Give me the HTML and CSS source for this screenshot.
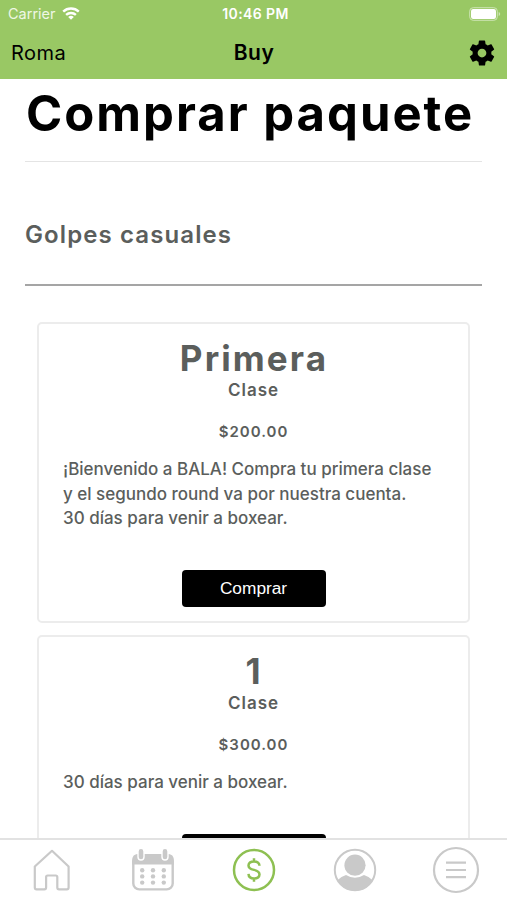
FILE: index.html
```html
<!DOCTYPE html>
<html lang="es">
<head>
    <meta charset="utf-8">
    <title>Buy</title>
    <link rel="stylesheet" href="styles.css">
</head>
<body>
<header class="top">
    <div class="status">
        <div class="carrier">
            <span>Carrier</span>
            <svg width="18" height="13" viewBox="0 0 18 13" fill="none" stroke="#fff" stroke-width="2.4">
                <path d="M1.2 4.6a11.3 11.3 0 0 1 15.6 0"/>
                <path d="M4.1 7.9a7.2 7.2 0 0 1 9.8 0"/>
                <path d="M9 12.8L6.2 10a4 4 0 0 1 5.6 0z" fill="#fff" stroke="none"/>
            </svg>
        </div>
        <span class="clock">10:46 PM</span>
        <svg class="battery" width="32" height="14" viewBox="0 0 32 14">
            <rect x=".7" y=".7" width="27.6" height="12.6" rx="3.5" fill="none" stroke="#cde4b4"/>
            <rect x="2" y="2" width="25" height="10" rx="2.2" fill="#fff"/>
            <path d="M29.7 5v4q1.5-.6 1.5-2t-1.5-2z" fill="#cde4b4"/>
        </svg>
    </div>
    <div class="nav">
        <span class="place">Roma</span>
        <span class="title">Buy</span>
        <svg class="gear" width="30" height="30" viewBox="0 0 24 24">
            <path d="M19.43 12.98c.04-.32.07-.64.07-.98s-.03-.66-.07-.98l2.11-1.65c.19-.15.24-.42.12-.64l-2-3.46c-.12-.22-.39-.3-.61-.22l-2.49 1c-.52-.4-1.08-.73-1.69-.98l-.38-2.65C14.46 2.18 14.25 2 14 2h-4c-.25 0-.46.18-.49.42l-.38 2.65c-.61.25-1.17.59-1.69.98l-2.49-1c-.23-.09-.49 0-.61.22l-2 3.46c-.13.22-.07.49.12.64l2.11 1.65c-.04.32-.07.65-.07.98s.03.66.07.98l-2.11 1.65c-.19.15-.24.42-.12.64l2 3.46c.12.22.39.3.61.22l2.49-1c.52.4 1.08.73 1.69.98l.38 2.65c.03.24.24.42.49.42h4c.25 0 .46-.18.49-.42l.38-2.65c.61-.25 1.17-.59 1.69-.98l2.49 1c.23.09.49 0 .61-.22l2-3.46c.12-.22.07-.49-.12-.64l-2.11-1.65zM12 15.500c-1.930 0-3.500-1.570-3.500-3.500s1.570-3.500 3.500-3.500 3.500 1.570 3.500 3.500-1.570 3.500-3.500 3.500z"/>
        </svg>
    </div>
</header>

<main class="content">
    <h1>Comprar paquete</h1>
    <h2>Golpes casuales</h2>
    <div class="card">
        <div class="name">Primera</div>
        <div class="unit">Clase</div>
        <div class="price">$200.00</div>
        <p class="info">¡Bienvenido a BALA! Compra tu primera clase<br>y el segundo round va por nuestra cuenta.<br>30 días para venir a boxear.</p>
        <button class="buy">Comprar</button>
    </div>
    <div class="card">
        <div class="name">1</div>
        <div class="unit">Clase</div>
        <div class="price">$300.00</div>
        <p class="info">30 días para venir a boxear.</p>
        <button class="buy">Comprar</button>
    </div>
</main>

<footer class="tabs">
    <!-- home -->
    <svg width="48" height="48" viewBox="0 0 48 48" fill="none" stroke="#c9c9c9" stroke-width="2.2" stroke-linejoin="round">
        <path d="M24 4.800L6.800 20.500v21q0 1.800 1.800 1.800h7.700q1.800 0 1.800-1.800V31q0-1.500 1.500-1.500h8.200q1.500 0 1.500 1.500v10.500q0 1.800 1.800 1.800h7.700q1.800 0 1.800-1.800v-21z"/>
    </svg>
    <!-- calendar -->
    <svg width="48" height="48" viewBox="0 0 48 48" fill="#c9c9c9">
        <rect x="4.300" y="9.200" width="39.400" height="34.200" rx="6" fill="none" stroke="#c9c9c9" stroke-width="2.400"/>
        <path d="M3.200 18.500V14q0-6 6-6h29.600q6 0 6 6v4.500z"/>
        <rect x="9" y="2.400" width="6" height="11.600" rx="3" stroke="#fff" stroke-width="1.400"/>
        <rect x="33" y="2.400" width="6" height="11.600" rx="3" stroke="#fff" stroke-width="1.400"/>
        <circle cx="13.200" cy="24.200" r="2.200"/><circle cx="24" cy="24.200" r="2.200"/><circle cx="34.800" cy="24.200" r="2.200"/>
        <circle cx="13.200" cy="30.400" r="2.200"/><circle cx="24" cy="30.400" r="2.200"/><circle cx="34.800" cy="30.400" r="2.200"/>
        <circle cx="13.200" cy="36.600" r="2.200"/><circle cx="24" cy="36.600" r="2.200"/><circle cx="34.800" cy="36.600" r="2.200"/>
    </svg>
    <!-- buy -->
    <svg width="48" height="48" viewBox="0 0 48 48" fill="none" stroke="#8ec052" stroke-width="2.500">
        <circle cx="24" cy="24" r="20"/>
        <path d="M29.500 19.800q-.2-4.400-5.500-4.400t-5.500 4q0 3.200 5.500 4.500t5.500 4.500q-.2 4.100-5.500 4.100t-5.500-4.600M24 12.200v3.400M24 32.300v3.500"/>
    </svg>
    <!-- profile -->
    <svg width="48" height="48" viewBox="0 0 48 48" fill="#c9c9c9">
        <circle cx="24" cy="24" r="20.200" fill="none" stroke="#c9c9c9" stroke-width="2"/>
        <circle cx="24" cy="19.200" r="10.600"/>
        <path d="M6.700 34q3.500-3.500 8.300-5 9 5.500 18 0 4.800 1.500 8.300 5Q35.700 45 24 45T6.700 34z"/>
    </svg>
    <!-- menu -->
    <svg width="48" height="48" viewBox="0 0 48 48" fill="none" stroke="#c9c9c9" stroke-width="2.200">
        <circle cx="24" cy="24" r="22"/>
        <path d="M14 16.600h20M14 24h20M14 31.200h20"/>
    </svg>
</footer>
</body>
</html>
```

FILE: styles.css
```css
* {
    box-sizing: border-box;
}
body {
    display: flex;
    flex-direction: column;
    height: 900px;
    margin: 0;
    overflow: hidden;
    font-family: Inter, "Liberation Sans", sans-serif;
    color: #5b5e5c;
    background: #fff;
}
.top {
    flex: none;
    height: 79px;
    background: #99c864;
    color: #000;
}
.status {
    display: grid;
    grid-template-columns: 1fr auto 1fr;
    align-items: center;
    height: 27px;
    padding: 0 6px 0 8px;
    font-size: 14px;
    line-height: 27px;
    color: #fff;
}
.carrier {
    display: flex;
    align-items: center;
    gap: 6px;
    font-size: 14.5px;
    color: #eef7e4;
}
.clock {
    padding-left: 2px;
    font-weight: 600;
    letter-spacing: 0.4px;
}
.battery {
    justify-self: end;
}
.nav {
    display: grid;
    grid-template-columns: 1fr auto 1fr;
    align-items: center;
    height: 52px;
    padding: 0 10px 0 11px;
    font-size: 20px;
}
.place {
    letter-spacing: 0.5px;
}
.title {
    font-size: 21px;
    font-weight: 600;
    line-height: 24px;
    padding-bottom: 1px;
    letter-spacing: 0.5px;
}
.gear {
    justify-self: end;
}
.content {
    flex: 1;
    min-height: 0;
    overflow: hidden;
    padding: 0 25px;
}
h1 {
    height: 83px;
    margin: 0;
    padding-left: 1px;
    border-bottom: 1px solid #e4e4e4;
    font-size: 49px;
    font-weight: 650;
    line-height: 70px;
    letter-spacing: 2px;
    white-space: nowrap;
    color: #000;
}
h2 {
    height: 124px;
    margin: 0;
    padding-top: 57px;
    border-bottom: 2px solid #a5a5a5;
    font-size: 24px;
    font-weight: 600;
    line-height: 32px;
    letter-spacing: 1.1px;
}
.card {
    display: flex;
    flex-direction: column;
    align-items: center;
    margin: 0 12px 12px;
    padding: 13px 24px 14px;
    border: 2px solid #ececec;
    border-radius: 5px;
}
h2 + .card {
    margin-top: 36px;
}
.name {
    padding-left: 1px;
    font-size: 35px;
    font-weight: 700;
    line-height: 42px;
    letter-spacing: 2.1px;
}
.unit {
    margin-top: 1px;
    font-size: 17px;
    font-weight: 600;
    line-height: 20px;
    letter-spacing: 1px;
}
.price {
    margin-top: 22px;
    font-size: 15px;
    font-weight: 600;
    line-height: 20px;
    letter-spacing: 1px;
}
.info {
    align-self: stretch;
    margin: 15px 0 39.5px;
    font-size: 17px;
    font-weight: 500;
    line-height: 24.5px;
    white-space: nowrap;
}
.buy {
    width: 144px;
    height: 37px;
    padding: 0;
    border: 0;
    border-radius: 4px;
    background: #000;
    color: #fff;
    font: 17.3px "Liberation Sans", sans-serif;
}
.tabs {
    display: grid;
    grid-template-columns: repeat(5, 1fr);
    flex: none;
    justify-items: center;
    height: 62px;
    padding: 6px 0 0 1px;
    border-top: 2px solid #e2e2e2;
    background: #fff;
}
```
